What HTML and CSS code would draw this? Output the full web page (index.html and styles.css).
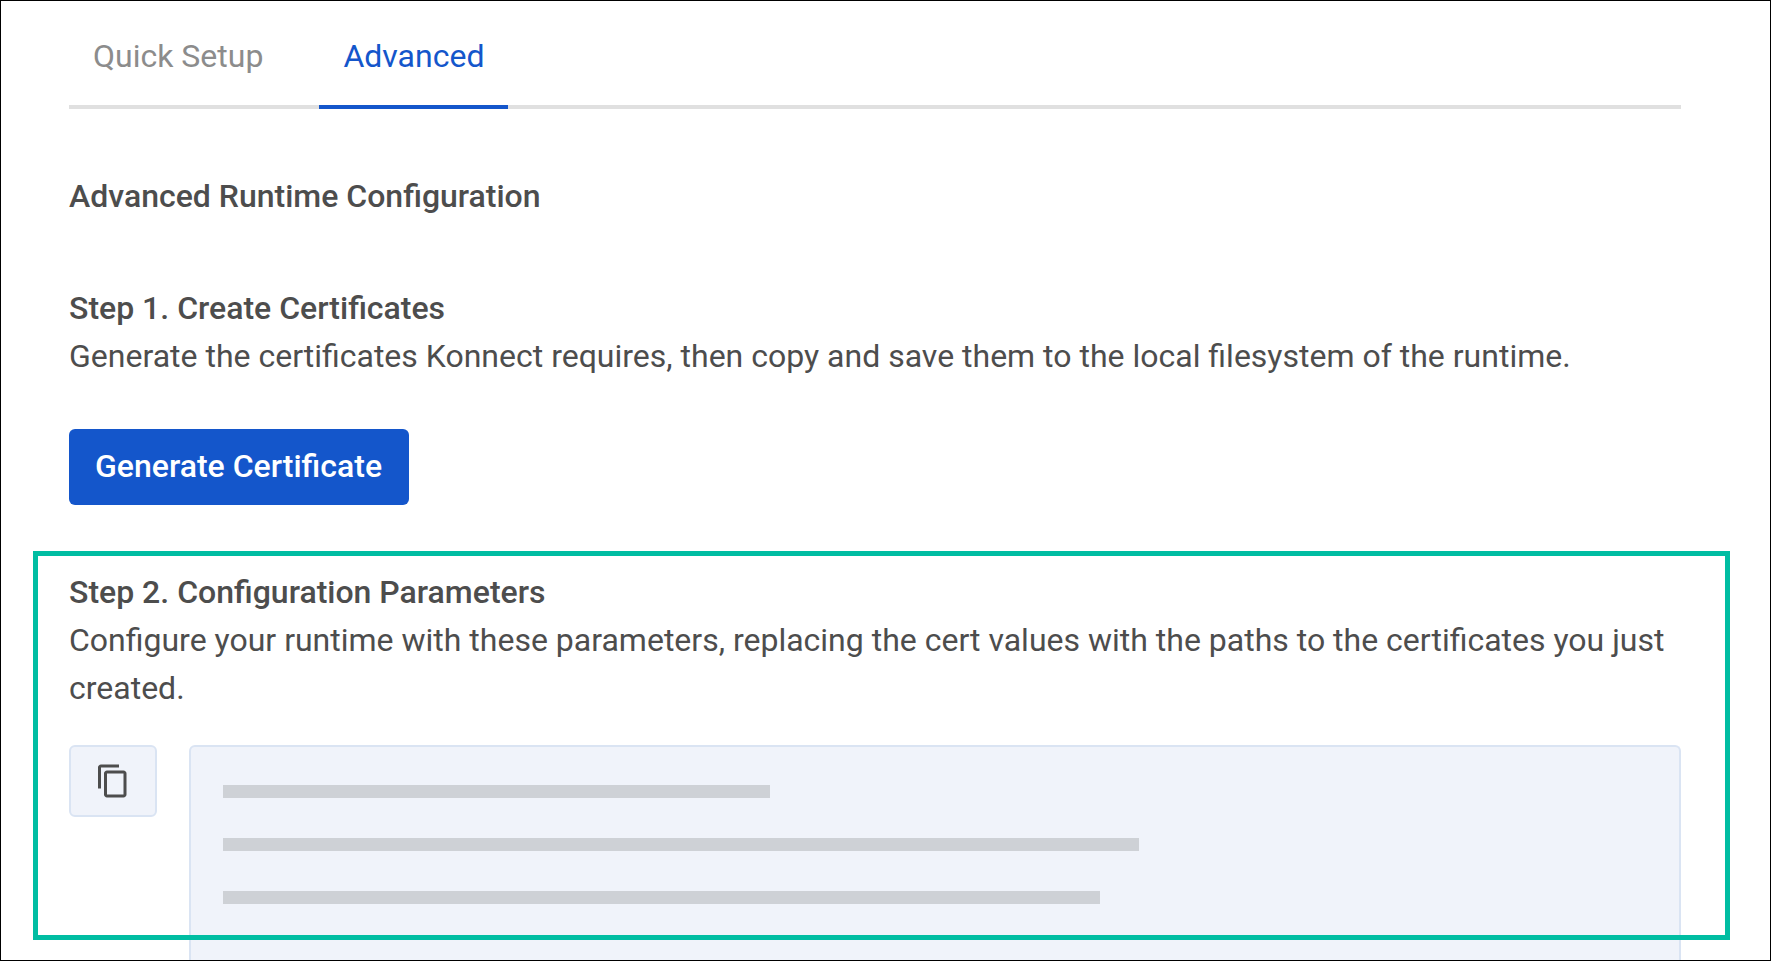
FILE: index.html
```
<!DOCTYPE html>
<html lang="en">
<head>
  <meta charset="utf-8">
  <meta name="viewport" content="width=device-width, initial-scale=1">
  <title>Advanced Runtime Configuration</title>
  <link rel="stylesheet" href="styles.css">
</head>
<body>
  <main class="page">
    <div class="tabs" role="tablist">
      <button class="tab" type="button" role="tab" aria-selected="false">Quick Setup</button>
      <button class="tab tab-active" type="button" role="tab" aria-selected="true">Advanced</button>
    </div>

    <h1 class="title">Advanced Runtime Configuration</h1>

    <section class="step">
      <h2 class="step-title">Step 1. Create Certificates</h2>
      <p class="step-text">Generate the certificates Konnect requires, then copy and save them to the local filesystem of the runtime.</p>
      <button class="primary-button" type="button">Generate Certificate</button>
    </section>

    <section class="step step-highlighted">
      <h2 class="step-title">Step 2. Configuration Parameters</h2>
      <p class="step-text">Configure your runtime with these parameters, replacing the cert values with the paths to the certificates you just created.</p>
      <div class="code-row">
        <button class="copy-button" type="button" aria-label="Copy parameters">
          <svg class="copy-icon" viewBox="0 0 24 24" aria-hidden="true">
            <path d="M16 1H4c-1.1 0-2 .9-2 2v14h2V3h12V1zm3 4H8c-1.1 0-2 .9-2 2v14c0 1.1.9 2 2 2h11c1.1 0 2-.9 2-2V7c0-1.1-.9-2-2-2zm0 16H8V7h11v14z"/>
          </svg>
        </button>
        <div class="code-panel">
          <div class="code-line line-short"></div>
          <div class="code-line line-long"></div>
          <div class="code-line line-medium"></div>
        </div>
      </div>
    </section>
  </main>
</body>
</html>
```

FILE: styles.css
```
* {
  box-sizing: border-box;
}

body {
  margin: 0;
  background: #fff;
  color: #4d4d4d;
  font-family: Roboto, "Liberation Sans", sans-serif;
  font-size: 32px;
  line-height: 48px;
}

button {
  margin: 0;
  border: 0;
  font: inherit;
  cursor: pointer;
}

.page {
  display: flex;
  flex-direction: column;
  min-height: 100vh;
  padding: 31px 89px 0 68px;
  border: 1px solid #000;
}

.tabs {
  display: flex;
  gap: 32px;
  border-bottom: 4px solid #e0e0e0;
}

.tab {
  margin-bottom: -4px;
  padding: 0 24px 25px;
  border-bottom: 4px solid transparent;
  background: none;
  color: #8c8c8c;
}

.tab-active {
  border-bottom-color: #1456cb;
  color: #1456cb;
}

.title,
.step-title {
  margin: 0;
  font-size: 32px;
  font-weight: 500;
}

.title {
  margin: 63px 0 64px;
}

.step-text {
  margin: 0;
}

.primary-button {
  margin-top: 49px;
  padding: 13px 27px 15px 26px;
  border-radius: 6px;
  background: #1456cb;
  color: #fff;
  font-weight: 500;
}

.step-highlighted {
  position: relative;
  display: flex;
  flex: 1;
  flex-direction: column;
  margin-top: 63px;
}

/* Callout frame drawn over the step and its code panel */
.step-highlighted::after {
  content: "";
  position: absolute;
  inset: -17px -49px 20px -36px;
  border: 5px solid #00bda2;
  pointer-events: none;
}

.code-row {
  display: flex;
  flex: 1;
  align-items: flex-start;
  gap: 32px;
  margin-top: 33px;
}

.copy-button,
.code-panel {
  border: 2px solid #dae4f3;
  background: #f0f3fa;
}

.copy-button {
  display: flex;
  align-items: center;
  justify-content: center;
  width: 88px;
  height: 72px;
  padding: 0;
  border-radius: 6px;
}

.copy-icon {
  width: 36px;
  height: 36px;
  fill: #4d4d4d;
}

.code-panel {
  display: flex;
  flex: 1;
  flex-direction: column;
  align-self: stretch;
  gap: 40px;
  padding: 38px 32px 54px;
  border-bottom: 0;
  border-radius: 6px 6px 0 0;
}

.code-line {
  height: 13px;
  background: #ced1d6;
}

.line-short {
  width: 38.4%;
}

.line-medium {
  width: 61.6%;
}

.line-long {
  width: 64.3%;
}
```
